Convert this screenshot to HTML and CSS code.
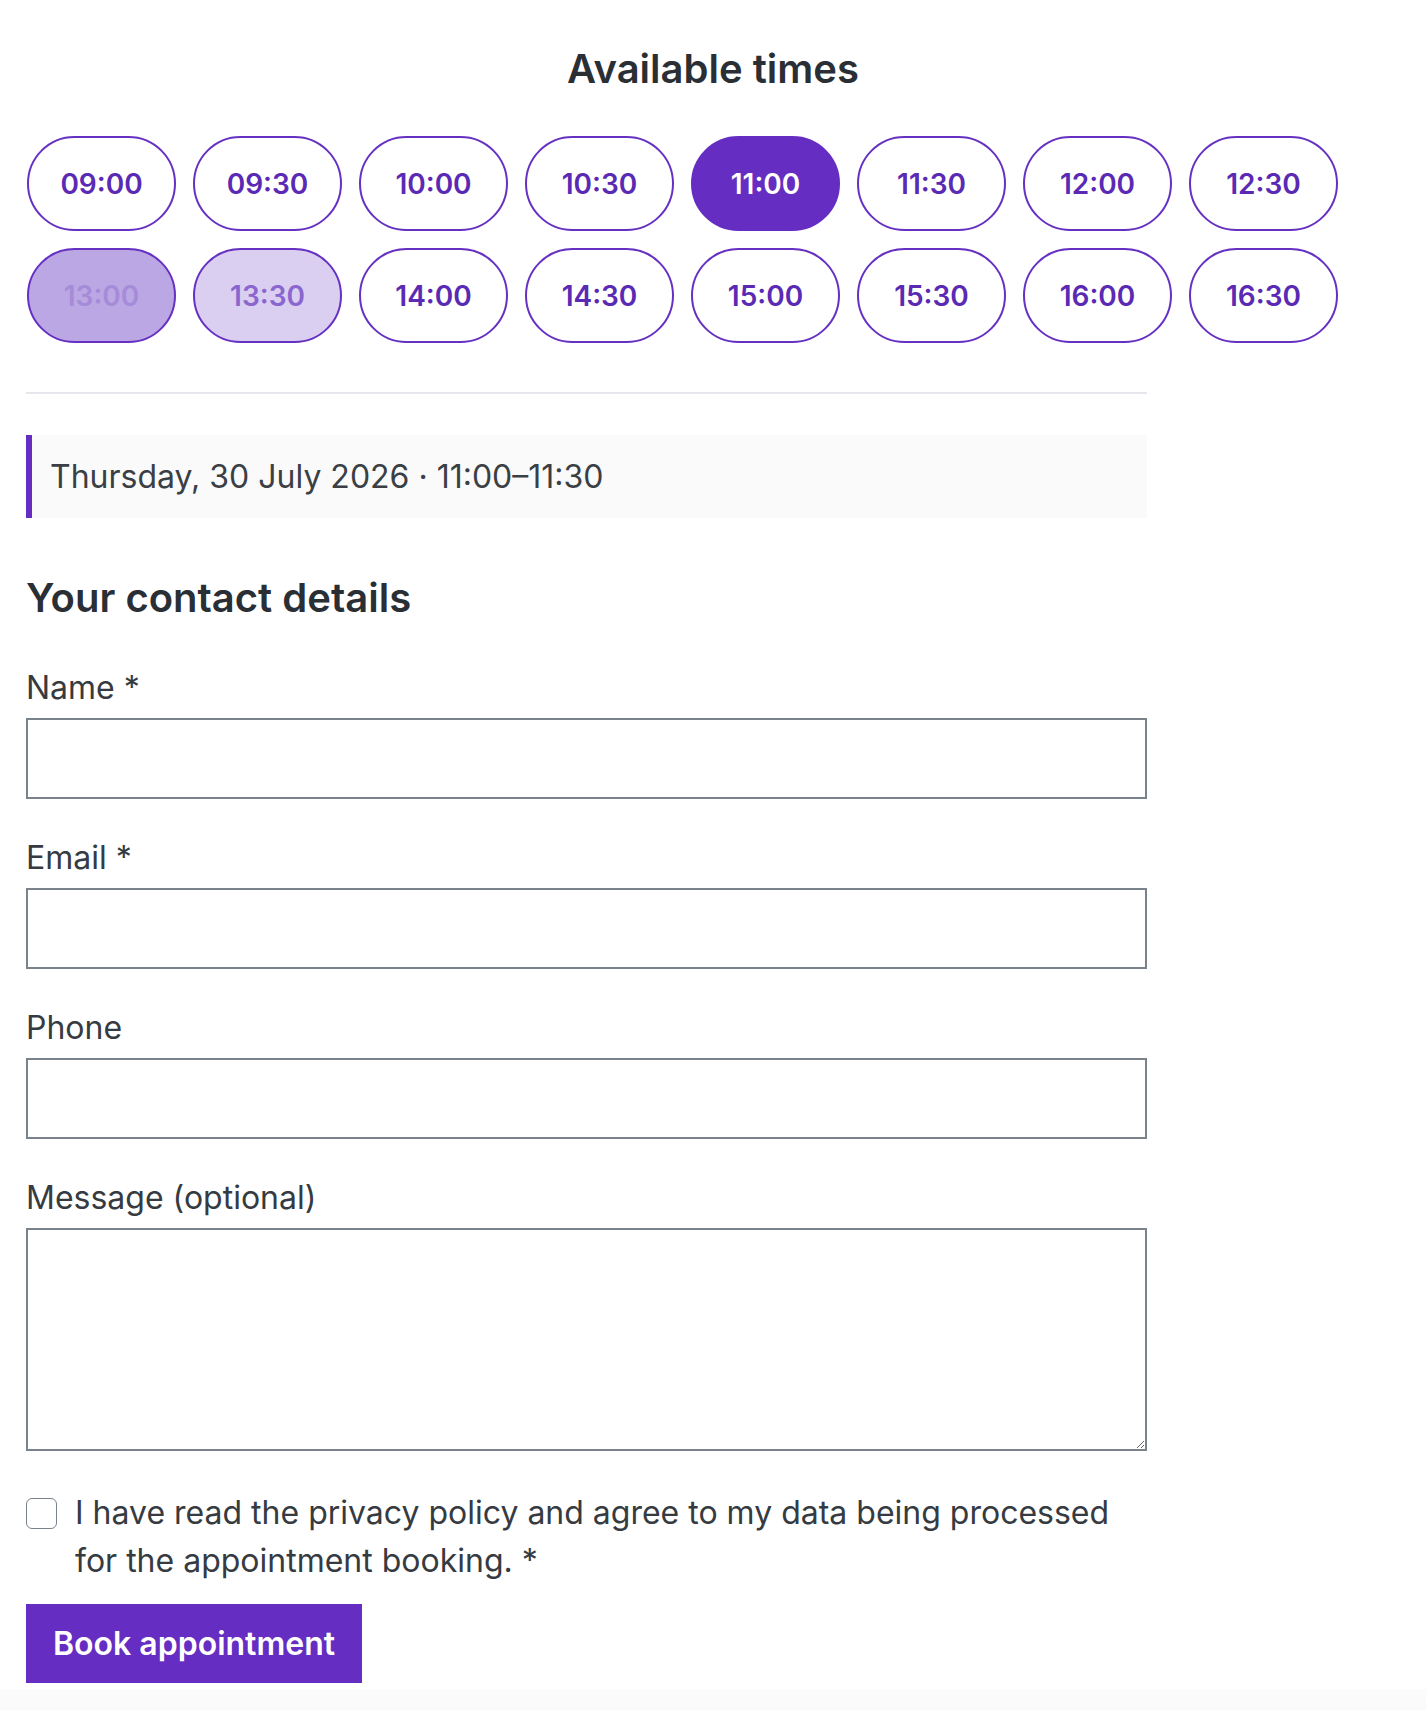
FILE: index.html
```html
<!DOCTYPE html>
<html lang="en">
<head>
<meta charset="utf-8">
<title>Book an appointment</title>
<link rel="stylesheet" href="styles.css">
</head>
<body>
<main class="page">
  <section class="times">
    <h2 class="times-title">Available times</h2>
    <div class="slots">
      <button class="slot" type="button">09:00</button>
      <button class="slot" type="button">09:30</button>
      <button class="slot" type="button">10:00</button>
      <button class="slot" type="button">10:30</button>
      <button class="slot slot-selected" type="button">11:00</button>
      <button class="slot" type="button">11:30</button>
      <button class="slot" type="button">12:00</button>
      <button class="slot" type="button">12:30</button>
      <button class="slot slot-booked" type="button">13:00</button>
      <button class="slot slot-hover" type="button">13:30</button>
      <button class="slot" type="button">14:00</button>
      <button class="slot" type="button">14:30</button>
      <button class="slot" type="button">15:00</button>
      <button class="slot" type="button">15:30</button>
      <button class="slot" type="button">16:00</button>
      <button class="slot" type="button">16:30</button>
    </div>
  </section>

  <section class="booking">
    <hr class="divider">
    <div class="summary">Thursday, 30 July 2026 · 11:00–11:30</div>

    <h3 class="contact-title">Your contact details</h3>

    <form class="form">
      <div class="field">
        <label class="label" for="name">Name *</label>
        <input class="input" id="name" type="text">
      </div>
      <div class="field">
        <label class="label" for="email">Email *</label>
        <input class="input" id="email" type="email">
      </div>
      <div class="field">
        <label class="label" for="phone">Phone</label>
        <input class="input" id="phone" type="tel">
      </div>
      <div class="field field-last">
        <label class="label" for="msg">Message (optional)</label>
        <textarea class="textarea" id="msg"></textarea>
      </div>
      <label class="consent">
        <input class="checkbox" type="checkbox">
        <span class="consent-text">I have read the privacy policy and agree to my data being processed for the appointment booking. *</span>
      </label>
      <button class="submit" type="button">Book appointment</button>
    </form>
  </section>
</main>
<div class="footer-strip"></div>
</body>
</html>
```

FILE: styles.css
```css
* {
  box-sizing: border-box;
}

html, body {
  margin: 0;
  padding: 0;
  background: #ffffff;
}

body {
  font-family: Inter, "Noto Sans", "Liberation Sans", sans-serif;
  color: #363b41;
  font-size: 32px;
  line-height: 48px;
}

.page {
  padding: 46px 26px 0 26px;
}

.times-title {
  margin: 0;
  text-align: center;
  font-size: 40px;
  line-height: 46px;
  font-weight: 600;
  color: #2a2f35;
}

.slots {
  margin-top: 44px;
  display: flex;
  flex-wrap: wrap;
  gap: 17px 17px;
  padding-left: 1px;
}

.slot {
  width: 149px;
  height: 95px;
  border: 2px solid #6631c3;
  border-radius: 48px;
  background: #ffffff;
  color: #5a2ab4;
  font-family: Inter, "Noto Sans", sans-serif;
  font-size: 28px;
  font-weight: 600;
  display: flex;
  align-items: center;
  justify-content: center;
  padding: 0;
  cursor: pointer;
}

.slot-selected {
  background: #652dc1;
  border-color: #652dc1;
  color: #ffffff;
}

.slot-booked {
  background: #bba7e3;
  color: #a68bd8;
}

.slot-hover {
  background: #dacff0;
  color: #8a66cf;
}

.booking {
  width: 1121px;
}

.divider {
  margin: 49px 0 0 0;
  border: 0;
  height: 2px;
  background: #e7e6ec;
}

.summary {
  margin-top: 41px;
  background: #fafafa;
  border-left: 6px solid #652dc1;
  padding: 18px 18px 17px 18px;
  font-size: 32px;
  line-height: 48px;
  color: #3a3f45;
}

.contact-title {
  margin: 56px 0 0 0;
  font-size: 40px;
  line-height: 48px;
  font-weight: 600;
  color: #2a2f35;
}

.form {
  margin-top: 42px;
  display: flex;
  flex-direction: column;
}

.field {
  display: flex;
  flex-direction: column;
  margin-bottom: 35px;
}

.field-last {
  margin-bottom: 38px;
}

.label {
  display: block;
  font-size: 32px;
  line-height: 48px;
  color: #363b41;
  margin-bottom: 6px;
}

.input,
.textarea {
  display: block;
  width: 100%;
  border: 2px solid #7a828b;
  border-radius: 0;
  background: #ffffff;
  font-family: inherit;
  font-size: 32px;
  margin: 0;
}

.input {
  height: 81px;
}

.textarea {
  height: 223px;
  resize: vertical;
}

.consent {
  display: flex;
  align-items: flex-start;
  gap: 18px;
  font-size: 32px;
  line-height: 48px;
  color: #363b41;
}

.checkbox {
  appearance: none;
  -webkit-appearance: none;
  flex: 0 0 auto;
  width: 31px;
  height: 31px;
  margin: 9px 0 0 0;
  border: 1.5px solid #7a828b;
  border-radius: 6px;
  background: #ffffff;
}

.consent-text {
  flex: 1 1 auto;
}

.submit {
  align-self: flex-start;
  margin-top: 19px;
  height: 79px;
  padding: 0 27px;
  border: 0;
  border-radius: 0;
  background: #652dc1;
  color: #ffffff;
  font-family: inherit;
  font-size: 32px;
  font-weight: 600;
  cursor: pointer;
}

.footer-strip {
  margin-top: 6px;
  height: 40px;
  background: linear-gradient(#fcfcfc, #f8f8f8);
}
```
